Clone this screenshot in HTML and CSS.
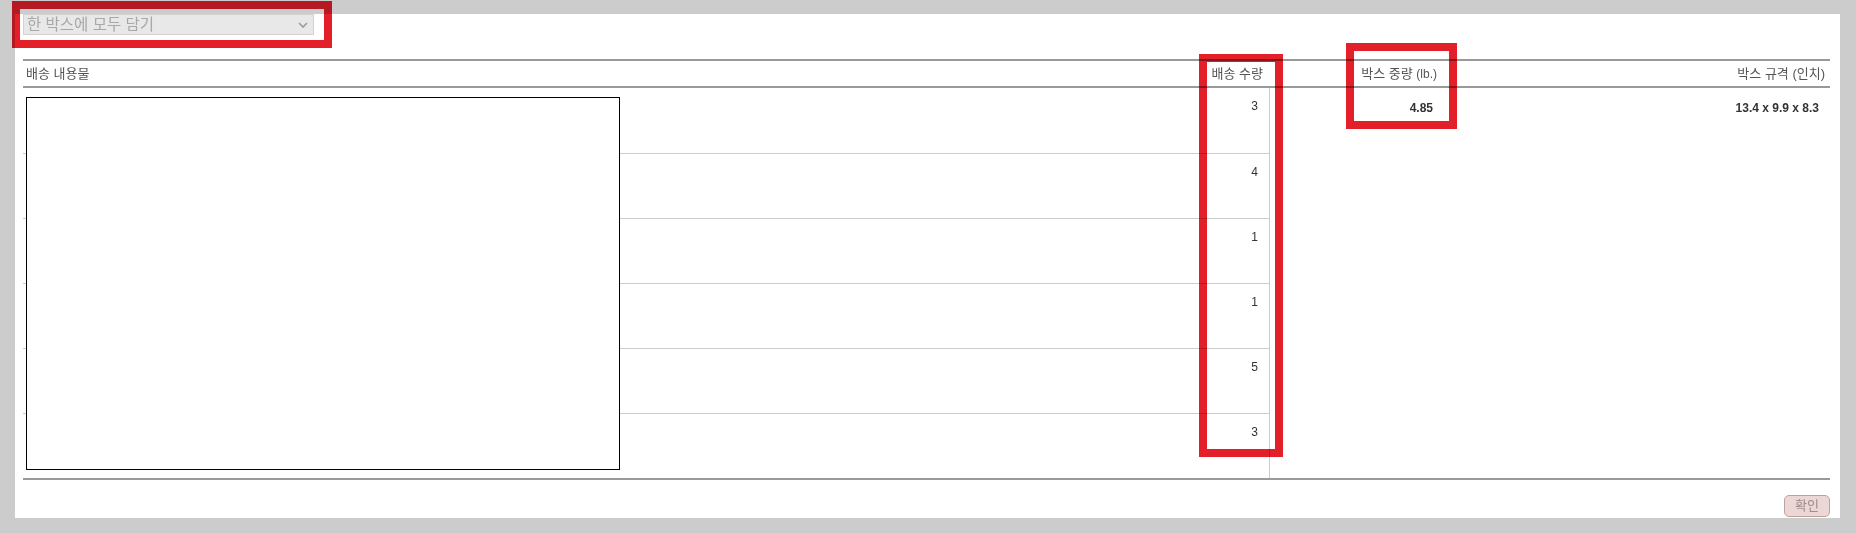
FILE: index.html
```html
<!DOCTYPE html>
<html lang="ko">
<head>
<meta charset="utf-8">
<title>박스 정보</title>
<link rel="stylesheet" href="styles.css">
</head>
<body>
<div class="panel">
  <div class="select">
    <span class="select-text">한 박스에 모두 담기</span>
    <svg class="chev" width="10" height="6" viewBox="0 0 10 6"><path d="M1 1 L5 5 L9 1" fill="none" stroke="#9a9a9a" stroke-width="1.6"/></svg>
  </div>
  <div class="table-wrap">
    <div class="ship">
      <div class="th c-contents">배송 내용물</div>
      <div class="th c-qty">배송 수량</div>
      <div class="th c-weight">박스 중량 <span class="unit">(lb.)</span></div>
      <div class="th c-dims">박스 규격 (인치)</div>

      <div class="td c-contents"></div>
      <div class="td c-qty">3</div>
      <div class="td c-weight span">4.85</div>
      <div class="td c-dims span">13.4 x 9.9 x 8.3</div>

      <div class="td c-contents"></div>
      <div class="td c-qty">4</div>
      <div class="td c-contents"></div>
      <div class="td c-qty">1</div>
      <div class="td c-contents"></div>
      <div class="td c-qty">1</div>
      <div class="td c-contents"></div>
      <div class="td c-qty">5</div>
      <div class="td c-contents last"></div>
      <div class="td c-qty last">3</div>
    </div>
    <div class="preview"></div>
  </div>
  <div class="actions"><button class="confirm" type="button">확인</button></div>
</div>
<div class="mark mark-select"></div>
<div class="mark mark-qty"></div>
<div class="mark mark-weight"></div>
</body>
</html>
```
FILE: styles.css
```css
html, body {
  margin: 0;
  padding: 0;
}
body {
  background: #cccccc;
  font-family: "Liberation Sans", "Noto Sans CJK KR", sans-serif;
  color: #333;
  padding: 14px 0 0 15px;
  height: 533px;
  box-sizing: border-box;
  overflow: hidden;
  position: relative;
}
.panel {
  background: #ffffff;
  width: 1825px;
  height: 504px;
  box-sizing: border-box;
  padding: 0 10px 0 8px;
  display: flex;
  flex-direction: column;
}
.select {
  width: 291px;
  height: 21px;
  box-sizing: border-box;
  background: #e8e8e8;
  border: 1px solid #d2d2d2;
  display: flex;
  align-items: center;
  justify-content: space-between;
  padding: 0 5px 0 3px;
}
.select-text {
  font-size: 15.5px;
  line-height: 19px;
  color: #a8a8a8;
}
.chev {
  display: block;
  margin-top: 1px;
}
.table-wrap {
  position: relative;
  margin-top: 24px;
  width: 1807px;
}
.ship {
  display: grid;
  grid-template-columns: 1176px 71px 172px 388px;
  grid-template-rows: 29px 66px 65px 65px 65px 65px 64px;
  border-bottom: 2px solid #999999;
}
.th {
  border-top: 2px solid #999999;
  border-bottom: 2px solid #999999;
  box-sizing: border-box;
  font-size: 13px;
  line-height: 25px;
  color: #555555;
  text-align: right;
  white-space: nowrap;
}
.th .unit { font-size: 12px; }
.th.c-contents { text-align: left; padding-left: 3px; }
.th.c-qty { padding-right: 7px; }
.th.c-weight { padding-right: 5px; }
.th.c-dims { padding-right: 5px; }
.td {
  box-sizing: border-box;
  font-size: 12px;
  line-height: 15px;
  text-align: right;
  color: #333333;
}
.td.c-contents {
  border-bottom: 1px solid #cccccc;
  grid-column: 1;
}
.td.c-qty {
  grid-column: 2;
  border-bottom: 1px solid #cccccc;
  border-right: 1px solid #cccccc;
  padding: 11px 11px 0 0;
}
.td.last {
  border-bottom: none;
}
.td.span {
  grid-row: 2 / span 6;
  font-weight: bold;
  padding-top: 13px;
}
.td.c-weight { grid-column: 3; padding-right: 9px; }
.td.c-dims { grid-column: 4; padding-right: 11px; }
.preview {
  position: absolute;
  left: 3px;
  top: 38px;
  width: 594px;
  height: 373px;
  box-sizing: border-box;
  border: 1px solid #000000;
  background: #ffffff;
}
.actions {
  display: flex;
  justify-content: flex-end;
  margin-top: 15px;
}
.confirm {
  width: 46px;
  height: 22px;
  box-sizing: border-box;
  background: #ecd6d6;
  border: 1px solid #bba3a3;
  border-radius: 5px;
  color: #9c8c8c;
  font-family: "Liberation Sans", "Noto Sans CJK KR", sans-serif;
  font-size: 13px;
  line-height: 18px;
  padding: 0;
}
.mark {
  position: absolute;
  box-sizing: border-box;
  border: 8px solid #e3202a;
  mix-blend-mode: multiply;
  pointer-events: none;
}
.mark-select { left: 12px; top: 1px; width: 320px; height: 47px; }
.mark-qty { left: 1199px; top: 54px; width: 84px; height: 403px; }
.mark-weight { left: 1346px; top: 43px; width: 111px; height: 86px; }
```
